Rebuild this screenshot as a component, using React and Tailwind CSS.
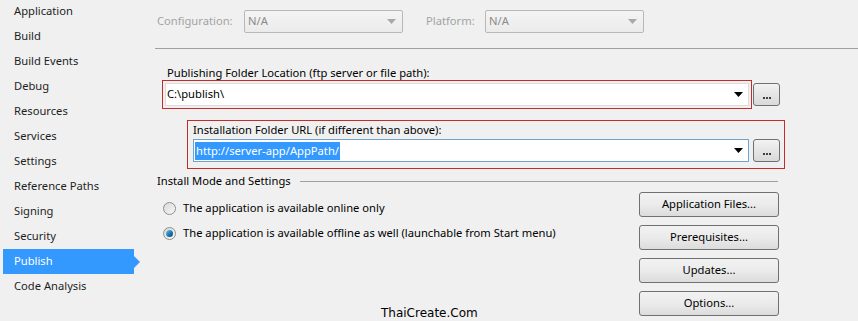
import React from "react";

const font = { fontFamily: '"Noto Sans", "Open Sans", sans-serif' };

function Arrow({ color = "#000" }) {
  return (
    <svg width="9" height="5" viewBox="0 0 9 5" className="shrink-0">
      <path d="M0 0 H9 L4.5 5 Z" fill={color} />
    </svg>
  );
}

function DotsButton() {
  return (
    <div className="w-[27px] h-[23px] border border-[#707070] rounded-[3px] bg-gradient-to-b from-[#f2f2f2] to-[#d9d9d9] flex items-end justify-center pb-[6px] shrink-0">
      <div className="flex gap-[1px]">
        <div className="w-[2px] h-[2px] bg-[#3a3a5a]" />
        <div className="w-[2px] h-[2px] bg-[#5a3a3a]" />
        <div className="w-[2px] h-[2px] bg-[#3a3a5a]" />
      </div>
    </div>
  );
}

function Button({ children }) {
  return (
    <div className="w-[140px] h-[25px] border border-[#707070] rounded-[3px] bg-gradient-to-b from-[#f2f2f2] via-[#ebebeb] to-[#dcdcdc] flex items-center justify-center text-black">
      {children}
    </div>
  );
}

function Radio({ checked }) {
  return (
    <div className="w-[13px] h-[13px] rounded-full border border-[#8e8f8f] bg-gradient-to-br from-[#d8d8d8] to-[#f8f8f8] flex items-center justify-center shrink-0">
      {checked && (
        <div className="w-[7px] h-[7px] rounded-full bg-gradient-to-br from-[#7ec4e8] via-[#1f7fb5] to-[#0c3f66]" />
      )}
    </div>
  );
}

const items = [
  "Application",
  "Build",
  "Build Events",
  "Debug",
  "Resources",
  "Services",
  "Settings",
  "Reference Paths",
  "Signing",
  "Security",
  "Publish",
  "Code Analysis",
];

export default function App() {
  return (
    <div
      className="w-[858px] h-[321px] bg-[#f0f0f0] flex relative overflow-hidden text-[11.2px] text-[#1e1e1e]"
      style={font}
    >
      {/* Sidebar */}
      <div className="w-[141px] shrink-0 flex flex-col mt-[-1px]">
        {items.map((it) =>
          it === "Publish" ? (
            <div key={it} className="h-[25px] flex items-center relative">
              <div className="ml-[3px] w-[131px] h-[25px] bg-[#3399ff] text-white flex items-center pl-[11px]">
                {it}
              </div>
              <div className="w-0 h-0 border-t-[6px] border-b-[6px] border-l-[6px] border-t-transparent border-b-transparent border-l-[#3399ff]" />
            </div>
          ) : (
            <div key={it} className="h-[25px] flex items-center pl-[14px]">
              {it}
            </div>
          )
        )}
      </div>

      {/* Main */}
      <div className="flex-1 flex flex-col">
        {/* Config row */}
        <div className="flex items-center mt-[10px] h-[23px] pl-[16px]">
          <span className="text-[#a3a3a3] w-[87px]">Configuration:</span>
          <div className="w-[159px] h-[23px] border border-[#b8b8b8] rounded-[2px] bg-gradient-to-b from-[#f4f4f4] to-[#ebebeb] flex items-center justify-between px-[3px] pr-[6px]">
            <span className="text-[#8a8a8a]">N/A</span>
            <Arrow color="#a8a8a8" />
          </div>
          <span className="text-[#a3a3a3] ml-[23px] w-[59px]">Platform:</span>
          <div className="w-[159px] h-[23px] border border-[#b8b8b8] rounded-[2px] bg-gradient-to-b from-[#f4f4f4] to-[#ebebeb] flex items-center justify-between px-[3px] pr-[6px]">
            <span className="text-[#8a8a8a]">N/A</span>
            <Arrow color="#a8a8a8" />
          </div>
        </div>

        {/* Separator */}
        <div className="ml-[14px] mt-[15px] h-px bg-[#a0a0a0]" />

        {/* Publishing folder */}
        <div className="pl-[26px] mt-[17px] h-[14px] leading-[14px] text-black">
          Publishing Folder Location (ftp server or file path):
        </div>
        <div className="flex items-center ml-[21px]">
          <div className="w-[590px] h-[29px] border border-[#c42b2b] p-[2px]">
            <div className="h-full bg-white border border-[#dcdcdc] flex items-center justify-between pl-[1px] pr-[5px]">
              <span className="text-black">C:\publish\</span>
              <Arrow />
            </div>
          </div>
          <div className="ml-[1px]">
            <DotsButton />
          </div>
        </div>

        {/* Installation folder */}
        <div className="ml-[46px] mt-[11px] w-[598px] h-[49px] border border-[#c42b2b] flex flex-col pl-[5px] pt-[1px]">
          <div className="h-[16px] leading-[16px] text-black">
            Installation Folder URL (if different than above):
          </div>
          <div className="flex items-center mt-[1px]">
            <div className="w-[556px] h-[23px] bg-white border border-[#6fa4cf] flex items-center justify-between pl-[1px] pr-[5px]">
              <span className="bg-[#3399ff] text-white leading-[18px] px-[1px]">
                http://server-app/AppPath/
              </span>
              <Arrow />
            </div>
            <div className="ml-[4px]">
              <DotsButton />
            </div>
          </div>
        </div>

        {/* Install mode header */}
        <div className="flex items-center pl-[16px] mt-[4px] h-[16px]">
          <span className="text-black">Install Mode and Settings</span>
          <div className="ml-[9px] flex-1 mr-[80px] h-px bg-[#a0a0a0]" />
        </div>

        <div className="flex">
          <div className="flex flex-col pl-[22px] pt-[12px] gap-[11px]">
            <div className="flex items-center gap-[7px] h-[14px]">
              <Radio />
              <span className="text-black">The application is available online only</span>
            </div>
            <div className="flex items-center gap-[7px] h-[14px]">
              <Radio checked />
              <span className="text-black">
                The application is available offline as well (launchable from Start menu)
              </span>
            </div>
          </div>
          <div className="ml-auto mr-[79px] mt-[3px] flex flex-col gap-[8px]">
            <Button>Application Files...</Button>
            <Button>Prerequisites...</Button>
            <Button>Updates...</Button>
            <Button>Options...</Button>
          </div>
        </div>
      </div>

      <div
        className="absolute left-[381px] top-[305px] text-[12px] text-black leading-[16px]"
        style={{ fontFamily: '"DejaVu Sans", Verdana, sans-serif' }}
      >
        ThaiCreate.Com
      </div>
    </div>
  );
}
